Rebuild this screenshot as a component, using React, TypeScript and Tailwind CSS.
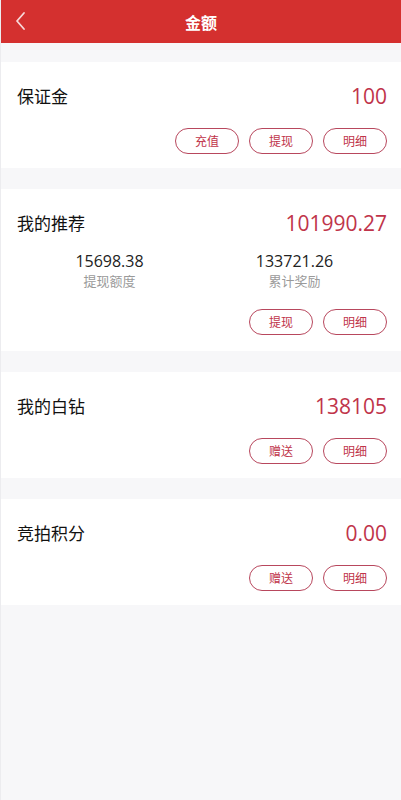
import React from "react";

const font = { fontFamily: '"Noto Sans CJK SC", "Noto Sans", sans-serif' };

function Btn({ label }: { label: string }) {
  return (
    <button className="w-[64px] h-[26px] rounded-full border border-[#b8475d] text-[12px] leading-none text-[#c0344a] flex items-center justify-center bg-white">
      {label}
    </button>
  );
}

function Card({
  title,
  value,
  buttons,
  children,
  extra,
}: {
  title: string;
  value: string;
  buttons: string[];
  children?: React.ReactNode;
  extra?: boolean;
}) {
  return (
    <div className={`bg-white pl-[16px] pr-[14px] pt-[20px] ${extra ? "pb-[16px]" : "pb-[14px]"}`}>
      <div className="flex items-center justify-between h-[28px]">
        <span className="text-[17px] text-[#111]">{title}</span>
        <span className="text-[21px] text-[#c0344a] leading-none" style={{ fontFamily: '"Open Sans", "Noto Sans", sans-serif' }}>
          {value}
        </span>
      </div>
      {children}
      <div className={`flex justify-end gap-[10px] ${extra ? "mt-[20px]" : "mt-[18px]"}`}>
        {buttons.map((b) => (
          <Btn key={b} label={b} />
        ))}
      </div>
    </div>
  );
}

export default function App() {
  return (
    <div className="w-[401px] min-h-[800px] bg-[#f7f7f9] border-l border-[#ececef]" style={font}>
      <div className="h-[43px] bg-[#d4302f] flex items-center relative">
        <svg className="absolute left-[13px] top-[11px]" width="14" height="20" viewBox="0 0 14 20" fill="none">
          <path d="M10 2 L3 10 L10 18" stroke="#f7d9d9" strokeWidth="1.8" strokeLinecap="round" strokeLinejoin="round" />
        </svg>
        <div className="flex-1 text-center text-white font-bold text-[16px]">金额</div>
      </div>
      <div className="flex flex-col gap-[21px] pt-[19px]">
        <Card title="保证金" value="100" buttons={["充值", "提现", "明细"]} />
        <Card title="我的推荐" value="101990.27" buttons={["提现", "明细"]} extra>
          <div className="grid grid-cols-2 mt-[13px]">
            <div className="flex flex-col items-center">
              <span className="text-[16px] leading-[22px] text-[#222]" style={{ fontFamily: '"Open Sans", sans-serif' }}>15698.38</span>
              <span className="text-[13px] leading-[17px] text-[#9a9a9a]">提现额度</span>
            </div>
            <div className="flex flex-col items-center">
              <span className="text-[16px] leading-[22px] text-[#222]" style={{ fontFamily: '"Open Sans", sans-serif' }}>133721.26</span>
              <span className="text-[13px] leading-[17px] text-[#9a9a9a]">累计奖励</span>
            </div>
          </div>
        </Card>
        <Card title="我的白钻" value="138105" buttons={["赠送", "明细"]} />
        <Card title="竞拍积分" value="0.00" buttons={["赠送", "明细"]} />
      </div>
    </div>
  );
}
